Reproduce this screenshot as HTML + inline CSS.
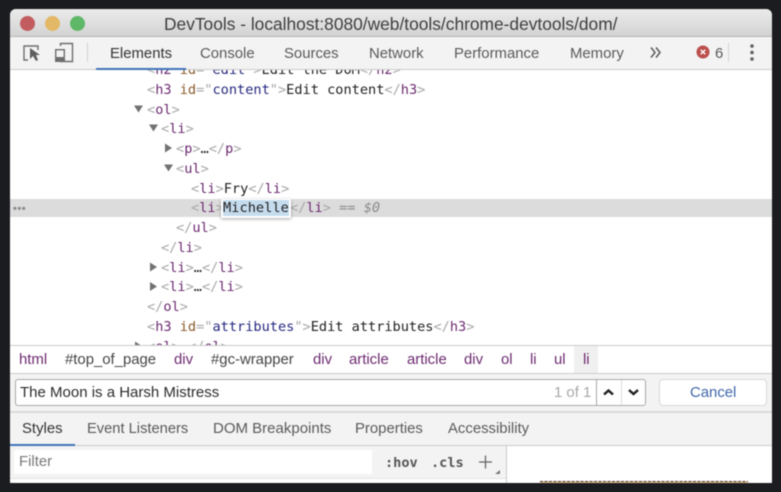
<!DOCTYPE html>
<html><head><meta charset="utf-8">
<style>
html,body{margin:0;padding:0;width:781px;height:492px;overflow:hidden;background:#1b1c1f}
#w{position:absolute;left:0;top:0;width:781px;height:492px;overflow:hidden;filter:blur(0.45px)}
#win{position:absolute;left:10px;top:9px;width:762px;height:474px;background:#fff;border-radius:6px 6px 5px 5px;overflow:hidden}
.a{position:absolute;white-space:nowrap}
.s{font-family:"Liberation Sans",sans-serif;font-size:14.9px;color:#5a5a5a;line-height:18px}
.m{font-family:"DejaVu Sans Mono",monospace;font-size:13.6px;line-height:20px;color:#a8a8a8}
.m b{font-weight:normal;color:#6c2a70}
.m i{font-style:normal;color:#222}
.m u{text-decoration:none;color:#8a5a2a}
.m em{font-style:normal;color:#25287f}
.crumb{font-family:"Liberation Sans",sans-serif;font-size:14.9px;line-height:18px;color:#6c2a70}
svg{position:absolute;overflow:visible}
</style></head><body><div id="w">
<div id="win"></div>

<div class="a" style="left:10px;top:199px;width:762px;height:18px;background:#dcdcdc"></div>
<div class="a" style="left:13px;top:198px;font:bold 11px/22px 'Liberation Sans',sans-serif;color:#8a8a8a;letter-spacing:.5px">•••</div>

<div class="a m" style="left:147px;top:60px">&lt;<b>h2</b> <u>id</u>="<em>edit</em>"&gt;<i>Edit the DOM</i>&lt;/<b>h2</b>&gt;</div>
<div class="a m" style="left:147px;top:80px">&lt;<b>h3</b> <u>id</u>="<em>content</em>"&gt;<i>Edit content</i>&lt;/<b>h3</b>&gt;</div>
<div class="a m" style="left:147px;top:100px">&lt;<b>ol</b>&gt;</div>
<div class="a m" style="left:161px;top:119px">&lt;<b>li</b>&gt;</div>
<div class="a m" style="left:176px;top:139px">&lt;<b>p</b>&gt;<i>…</i>&lt;/<b>p</b>&gt;</div>
<div class="a m" style="left:176px;top:159px">&lt;<b>ul</b>&gt;</div>
<div class="a m" style="left:191px;top:179px">&lt;<b>li</b>&gt;<i>Fry</i>&lt;/<b>li</b>&gt;</div>
<div class="a m" style="left:191px;top:198px">&lt;<b>li</b>&gt;</div>
<div class="a m" style="left:290px;top:198px">&lt;/<b>li</b>&gt; <span style="color:#8a8a8a">==</span> <span style="color:#8a8a8a;font-style:italic">$0</span></div>
<div class="a" style="left:221px;top:199px;width:70px;height:19px;background:#fff;box-shadow:0 1px 3px rgba(0,0,0,.35)"></div>
<div class="a" style="left:223px;top:200px;width:66px;height:16px;background:#c5dcee"></div>
<div class="a m" style="left:223px;top:198px;color:#222;letter-spacing:.05px">Michelle</div>
<div class="a m" style="left:176px;top:218px">&lt;/<b>ul</b>&gt;</div>
<div class="a m" style="left:161px;top:238px">&lt;/<b>li</b>&gt;</div>
<div class="a m" style="left:161px;top:258px">&lt;<b>li</b>&gt;<i>…</i>&lt;/<b>li</b>&gt;</div>
<div class="a m" style="left:161px;top:277px">&lt;<b>li</b>&gt;<i>…</i>&lt;/<b>li</b>&gt;</div>
<div class="a m" style="left:147px;top:297px">&lt;/<b>ol</b>&gt;</div>
<div class="a m" style="left:147px;top:317px">&lt;<b>h3</b> <u>id</u>="<em>attributes</em>"&gt;<i>Edit attributes</i>&lt;/<b>h3</b>&gt;</div>
<div class="a m" style="left:147px;top:337px">&lt;<b>ol</b>&gt;<i>…</i>&lt;/<b>ol</b>&gt;</div>

<svg style="left:0;top:0" width="781" height="492" viewBox="0 0 781 492">
<g fill="#727272">
<path d="M134 105.500H143L138.500 112.500Z"/>
<path d="M149 124.500H158L153.500 131.500Z"/>
<path d="M165 143.500V152.500L172 148Z"/>
<path d="M164 164.500H173L168.500 171.500Z"/>
<path d="M150 262.500V271.500L157 267Z"/>
<path d="M150 282V291L157 286.500Z"/>
<path d="M135 341.500V350L142 346Z"/>
</g>
</svg>

<div class="a" style="left:10px;top:9px;width:762px;height:27px;background:linear-gradient(#ebebeb,#d3d3d3);border-radius:6px 6px 0 0"></div>
<div class="a" style="left:10px;top:36px;width:762px;height:1px;background:#b4b4b4"></div>
<div class="a" style="left:20px;top:16px;width:15px;height:15px;border-radius:50%;background:#c25c5e"></div>
<div class="a" style="left:45px;top:16px;width:15px;height:15px;border-radius:50%;background:#e3b866"></div>
<div class="a" style="left:70px;top:16px;width:15px;height:15px;border-radius:50%;background:#5fb768"></div>
<div class="a s" style="left:164px;top:15px;font-size:17.36px;color:#3e3e3e">DevTools - localhost:8080/web/tools/chrome-devtools/dom/</div>
<div class="a" style="left:10px;top:37px;width:762px;height:32px;background:#f3f3f3"></div>
<div class="a" style="left:10px;top:69px;width:762px;height:1px;background:#ccc"></div>
<div class="a" style="left:96px;top:68px;width:90px;height:2px;background:#3e73b8"></div>
<svg style="left:0;top:0" width="781" height="492" viewBox="0 0 781 492">
<path d="M28 60H24V46H38V50" fill="none" stroke="#6e6e6e" stroke-width="1.4"/>
<path d="M30 48L30 59L33 56L36 61L38 60L36 55L40 55Z" fill="#5f5f5f"/>
<path d="M60.500 46V43.500H72.500V61.500H60" fill="none" stroke="#6e6e6e" stroke-width="1.4"/>
<rect x="55.700" y="49.700" width="8.600" height="11.600" fill="#f3f3f3" stroke="#6e6e6e" stroke-width="1.400"/>
<rect x="56" y="57" width="8" height="4" fill="#6e6e6e"/>
<rect x="87" y="43" width="1" height="19" fill="#d0d0d0"/>
<path d="M651 47.500L655 52.500L651 57.500M656 47.500L660 52.500L656 57.500" fill="none" stroke="#5a5a5a" stroke-width="1.500"/>
<circle cx="703" cy="52" r="6.500" fill="#bc4e4b"/>
<path d="M700.700 49.700L705.300 54.300M705.300 49.700L700.700 54.300" stroke="#fff" stroke-width="1.400"/>
<rect x="728" y="43" width="1" height="19" fill="#d4d4d4"/>
<circle cx="752" cy="46" r="1.800" fill="#606060"/><circle cx="752" cy="52.500" r="1.800" fill="#606060"/><circle cx="752" cy="59" r="1.800" fill="#606060"/>
</svg>
<div class="a s" style="left:110px;top:45px;color:#333">Elements</div>
<div class="a s" style="left:200px;top:45px">Console</div>
<div class="a s" style="left:284px;top:45px">Sources</div>
<div class="a s" style="left:369px;top:45px">Network</div>
<div class="a s" style="left:454px;top:45px">Performance</div>
<div class="a s" style="left:570px;top:45px">Memory</div>
<div class="a s" style="left:715px;top:45px">6</div>

<div class="a" style="left:10px;top:345px;width:762px;height:138px;background:#f3f3f3"></div>
<div class="a" style="left:10px;top:345px;width:762px;height:1px;background:#ccc"></div>
<div class="a" style="left:10px;top:346px;width:762px;height:27px;background:#fff"></div>
<div class="a" style="left:10px;top:373px;width:762px;height:1px;background:#ccc"></div>
<div class="a" style="left:574px;top:346px;width:24px;height:27px;background:#f0f0f0"></div>
<div class="a crumb" style="left:19px;top:351px">html</div>
<div class="a crumb" style="left:65px;top:351px;color:#444">#top_of_page</div>
<div class="a crumb" style="left:174px;top:351px">div</div>
<div class="a crumb" style="left:211px;top:351px;color:#444">#gc-wrapper</div>
<div class="a crumb" style="left:313px;top:351px">div</div>
<div class="a crumb" style="left:349px;top:351px">article</div>
<div class="a crumb" style="left:407px;top:351px">article</div>
<div class="a crumb" style="left:464px;top:351px">div</div>
<div class="a crumb" style="left:501px;top:351px">ol</div>
<div class="a crumb" style="left:530px;top:351px">li</div>
<div class="a crumb" style="left:554px;top:351px">ul</div>
<div class="a crumb" style="left:583px;top:351px">li</div>

<div class="a" style="left:15px;top:379px;width:629px;height:25px;background:#fff;border:1px solid #a8a8a8;border-radius:3px"></div>
<div class="a" style="left:596px;top:380px;width:1px;height:25px;background:#a8a8a8"></div>
<div class="a" style="left:621px;top:380px;width:1px;height:25px;background:#ddd"></div>
<svg style="left:0;top:0" width="781" height="492" viewBox="0 0 781 492">
<path d="M604 394.500L608.500 390.500L613 394.500" fill="none" stroke="#222" stroke-width="2.500"/>
<path d="M629 390L633.500 394L638 390" fill="none" stroke="#222" stroke-width="2.500"/>
</svg>
<div class="a s" style="left:20px;top:384px;color:#2c2c2c;font-size:15px">The Moon is a Harsh Mistress</div>
<div class="a s" style="left:554px;top:384px;color:#a8a8a8">1 of 1</div>
<div class="a" style="left:659px;top:379px;width:106px;height:25px;background:#fff;border:1px solid #d8d8d8;border-radius:4px"></div>
<div class="a s" style="left:690px;top:384px;color:#3e66a8">Cancel</div>

<div class="a" style="left:10px;top:411px;width:762px;height:2px;background:#dadada"></div>
<div class="a" style="left:10px;top:445px;width:762px;height:1px;background:#ccc"></div>
<div class="a" style="left:10px;top:444px;width:65px;height:2px;background:#3e73b8"></div>
<div class="a s" style="left:22px;top:420px;color:#333">Styles</div>
<div class="a s" style="left:87px;top:420px;font-size:14.7px">Event Listeners</div>
<div class="a s" style="left:213px;top:420px;font-size:15px">DOM Breakpoints</div>
<div class="a s" style="left:355px;top:420px">Properties</div>
<div class="a s" style="left:448px;top:420px">Accessibility</div>

<div class="a" style="left:14px;top:450px;width:358px;height:24px;background:#fff"></div>
<div class="a s" style="left:19px;top:453px;color:#777">Filter</div>
<div class="a" style="left:10px;top:478px;width:497px;height:1px;background:#e2e2e2"></div>
<div class="a" style="left:10px;top:479px;width:497px;height:4px;background:#fff;border-radius:0 0 0 5px"></div>
<div class="a" style="left:506px;top:446px;width:1px;height:37px;background:#ccc"></div>
<div class="a" style="left:507px;top:446px;width:265px;height:37px;background:#fff;border-radius:0 0 5px 0"></div>
<div class="a" style="left:385px;top:453px;font:bold 13.6px/20px 'DejaVu Sans Mono',monospace;color:#555">:hov</div>
<div class="a" style="left:431px;top:453px;font:bold 13.6px/20px 'DejaVu Sans Mono',monospace;color:#555">.cls</div>
<svg style="left:0;top:0" width="781" height="492" viewBox="0 0 781 492">
<path d="M479 462H492M485.500 455.500V468.500" stroke="#666" stroke-width="1.300" fill="none"/>
<path d="M500 474H495L500 470Z" fill="#777"/>
<rect x="540" y="481" width="208" height="2" fill="#f9cc9d"/>
<path d="M540 481.500H748" stroke="#333" stroke-width="1" stroke-dasharray="3 1.500"/>
</svg>
</div></body></html>
